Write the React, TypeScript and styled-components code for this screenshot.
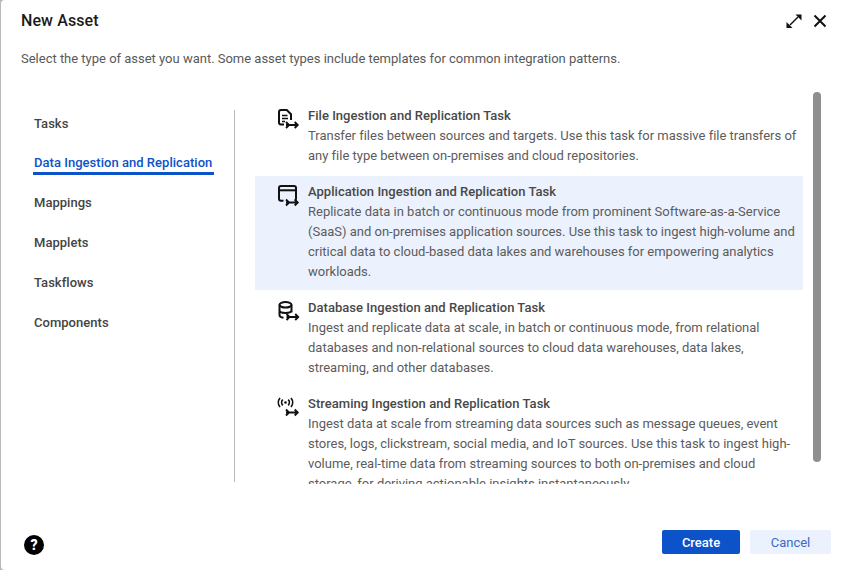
import React from "react";
import styled, { createGlobalStyle } from "styled-components";

const Global = createGlobalStyle`
  html, body { margin: 0; padding: 0; height: 570px; overflow: hidden; background: #b9b9b9; }
  #root { height: 570px; }
  * { box-sizing: border-box; }
`;

const Dialog = styled.div`
  width: 847px; height: 570px; margin-left: 1px; background: #fff;
  border-radius: 4px 0 0 4px; position: relative;
  font-family: Roboto, "Liberation Sans", sans-serif;
  display: flex; flex-direction: column;
`;
const Header = styled.div`
  height: 40px; padding: 11px 20px 0 20px; display: flex; justify-content: space-between; align-items: flex-start;
`;
const Title = styled.h1`
  margin: 0; font-size: 16px; line-height: 19px; font-weight: 500; color: #1a1a1a; letter-spacing: 0.1px;
`;
const HeaderIcons = styled.div`
  display: flex; gap: 9px; align-items: center; margin-top: 1px;
`;
const Description = styled.p`
  margin: 9px 0 0 20px; font-size: 13px; line-height: 20px; color: #595959; height: 20px; letter-spacing: -0.01px;
`;
const Body = styled.div`
  display: flex; height: 372px; margin-top: 41px;
`;
const Nav = styled.nav`
  width: 234px; border-right: 1px solid #b9b9b9; padding-left: 32px; margin-right: 20px; flex: none; height: 372px;
  display: flex; flex-direction: column;
`;
const NavItem = styled.div<{ $active?: boolean; $first?: boolean }>`
  width: 181px; padding: ${(p) => (p.$active ? "3px" : p.$first ? "4px" : "3px")} 0 0 1px; font-size: 13px; line-height: 20px; font-weight: 500; flex: none;
  height: ${(p) => (p.$active ? "25px" : "40px")};
  margin-bottom: ${(p) => (p.$active ? "15px" : "0")};
  color: ${(p) => (p.$active ? "#0c52c9" : "#444444")};
  border-bottom: ${(p) => (p.$active ? "3px solid #0c52c9" : "0")};
  letter-spacing: 0.03px;
`;
const List = styled.div`
  width: 548px; height: 384px; margin-top: -10px; overflow: hidden; display: flex; flex-direction: column; gap: 2px; flex: none;
`;
const Item = styled.div<{ $selected?: boolean }>`
  display: flex; gap: 6px; padding: 6px 6px 8px 21px; flex: none;
  background: ${(p) => (p.$selected ? "#ebf1fd" : "transparent")};
`;
const IconBox = styled.div`
  width: 26px; flex: none; height: 24px; padding-top: 1px;
`;
const ItemText = styled.div`
  flex: 1; min-width: 0;
`;
const ItemTitle = styled.div`
  font-size: 13px; line-height: 20px; font-weight: 500; color: #484848; letter-spacing: 0.03px;
`;
const ItemDesc = styled.div`
  font-size: 13px; line-height: 20px; color: #5c5c5c; letter-spacing: -0.01px;
`;
const Thumb = styled.div`
  position: absolute; left: 812px; top: 92px; width: 8px; height: 370px; border-radius: 4px; background: #8f8f8f;
`;
const Footer = styled.div`
  flex: 1; display: flex; align-items: flex-start; justify-content: space-between; padding: 48px 17px 0 23px;
`;
const Help = styled.div`
  width: 20px; height: 20px; border-radius: 50%; background: #000; color: #fff; font-size: 14px; font-weight: 900;
  line-height: 20px; text-align: center; margin-top: 5px;
`;
const Buttons = styled.div`
  display: flex; gap: 10px;
`;
const Btn = styled.button<{ $primary?: boolean }>`
  height: 24px; width: ${(p) => (p.$primary ? "78px" : "81px")}; border: 0; border-radius: 2px;
  font-family: inherit; font-size: 13px; padding: 0;
  font-weight: ${(p) => (p.$primary ? 500 : 400)};
  background: ${(p) => (p.$primary ? "#0c52c9" : "#ebf1fd")};
  color: ${(p) => (p.$primary ? "#fff" : "#3f68cc")};
`;

const Arrow = ({ y, x = 10 }: { y: number; x?: number }) => (
  <path d={`M${x} ${y}h11.500M${x + 8.700} ${y - 3}l3 3-3 3M${x} ${y - 3}l3 3-3 3`} fill="none" stroke="#111" strokeWidth="1.900" />
);
const svgProps = { width: 24, height: 24, viewBox: "0 0 24 24", fill: "none", stroke: "#111", strokeWidth: 2 } as const;

const FileIcon = () => (
  <svg {...svgProps}>
    <path d="M8 17.500H5A2 2 0 0 1 3 15.500V5A2 2 0 0 1 5 3h5.800L15 7.200V13" />
    <path d="M6 8.500h5.500M6 11.500h6M6 14.500h3" strokeWidth="1.500" />
    <Arrow y={18} />
  </svg>
);
const AppIcon = () => (
  <svg {...svgProps}>
    <path d="M7.500 17.800H5A2 2 0 0 1 3 15.800V5a2 2 0 0 1 2-2h13a2 2 0 0 1 2 2v10.800a2 2 0 0 1-1 1.700" />
    <path d="M3 7.300h17" />
    <Arrow y={19.500} />
  </svg>
);
const DbIcon = () => (
  <svg {...svgProps}>
    <ellipse cx="9.500" cy="5.800" rx="6" ry="2.800" />
    <path d="M3.500 5.800v10.500c0 1.300 1.600 2.200 4 2.500M15.500 5.800V13.500M3.500 11.300c0 1.500 2.700 2.700 6 2.700s6-1.200 6-2.700" />
    <Arrow y={18} x={10.500} />
  </svg>
);
const StreamIcon = () => (
  <svg {...svgProps} strokeWidth={1.700}>
    <circle cx="9.500" cy="7.500" r="1.300" fill="#111" stroke="none" />
    <path d="M6.800 4.700a4 4 0 0 0 0 5.600M12.200 4.700a4 4 0 0 1 0 5.600M4 3a7 7 0 0 0 0 9M15 3a7 7 0 0 1 0 9" />
    <Arrow y={17.500} x={10} />
  </svg>
);

const items = [
  { icon: <FileIcon />, title: "File Ingestion and Replication Task", lines: ["Transfer files between sources and targets. Use this task for massive file transfers of", "any file type between on-premises and cloud repositories."] },
  { icon: <AppIcon />, selected: true, title: "Application Ingestion and Replication Task", lines: ["Replicate data in batch or continuous mode from prominent Software-as-a-Service", "(SaaS) and on-premises application sources. Use this task to ingest high-volume and", "critical data to cloud-based data lakes and warehouses for empowering analytics", "workloads."] },
  { icon: <DbIcon />, title: "Database Ingestion and Replication Task", lines: ["Ingest and replicate data at scale, in batch or continuous mode, from relational", "databases and non-relational sources to cloud data warehouses, data lakes,", "streaming, and other databases."] },
  { icon: <StreamIcon />, title: "Streaming Ingestion and Replication Task", lines: ["Ingest data at scale from streaming data sources such as message queues, event", "stores, logs, clickstream, social media, and IoT sources. Use this task to ingest high-", "volume, real-time data from streaming sources to both on-premises and cloud", "storage, for deriving actionable insights instantaneously."] },
];

export default function App() {
  return (
    <>
      <Global />
      <Dialog>
        <Header>
          <Title>New Asset</Title>
          <HeaderIcons>
            <svg width="18" height="18" viewBox="0 0 18 18" fill="#111" stroke="none">
              <path d="M5 13 13 5" stroke="#111" strokeWidth="1.500" fill="none" />
              <path d="M10.500 2.500H16.500V8.500L14.500 6.500 12.500 4.500ZM1.500 16V10L3.500 12 5.500 14 7.500 16Z" />
            </svg>
            <svg width="16" height="16" viewBox="0 0 16 16" fill="none" stroke="#111" strokeWidth="2">
              <path d="M2.500 2.500l11 11M13.500 2.500l-11 11" />
            </svg>
          </HeaderIcons>
        </Header>
        <Description>Select the type of asset you want. Some asset types include templates for common integration patterns.</Description>
        <Body>
          <Nav>
            <NavItem $first>Tasks</NavItem>
            <NavItem $active>Data Ingestion and Replication</NavItem>
            <NavItem>Mappings</NavItem>
            <NavItem>Mapplets</NavItem>
            <NavItem>Taskflows</NavItem>
            <NavItem>Components</NavItem>
          </Nav>
          <List>
            {items.map((it) => (
              <Item key={it.title} $selected={it.selected}>
                <IconBox>{it.icon}</IconBox>
                <ItemText>
                  <ItemTitle>{it.title}</ItemTitle>
                  <ItemDesc>{it.lines.map((l) => <div key={l}>{l}</div>)}</ItemDesc>
                </ItemText>
              </Item>
            ))}
          </List>
        </Body>
        <Footer>
          <Help>?</Help>
          <Buttons>
            <Btn $primary>Create</Btn>
            <Btn>Cancel</Btn>
          </Buttons>
        </Footer>
        <Thumb />
      </Dialog>
    </>
  );
}
